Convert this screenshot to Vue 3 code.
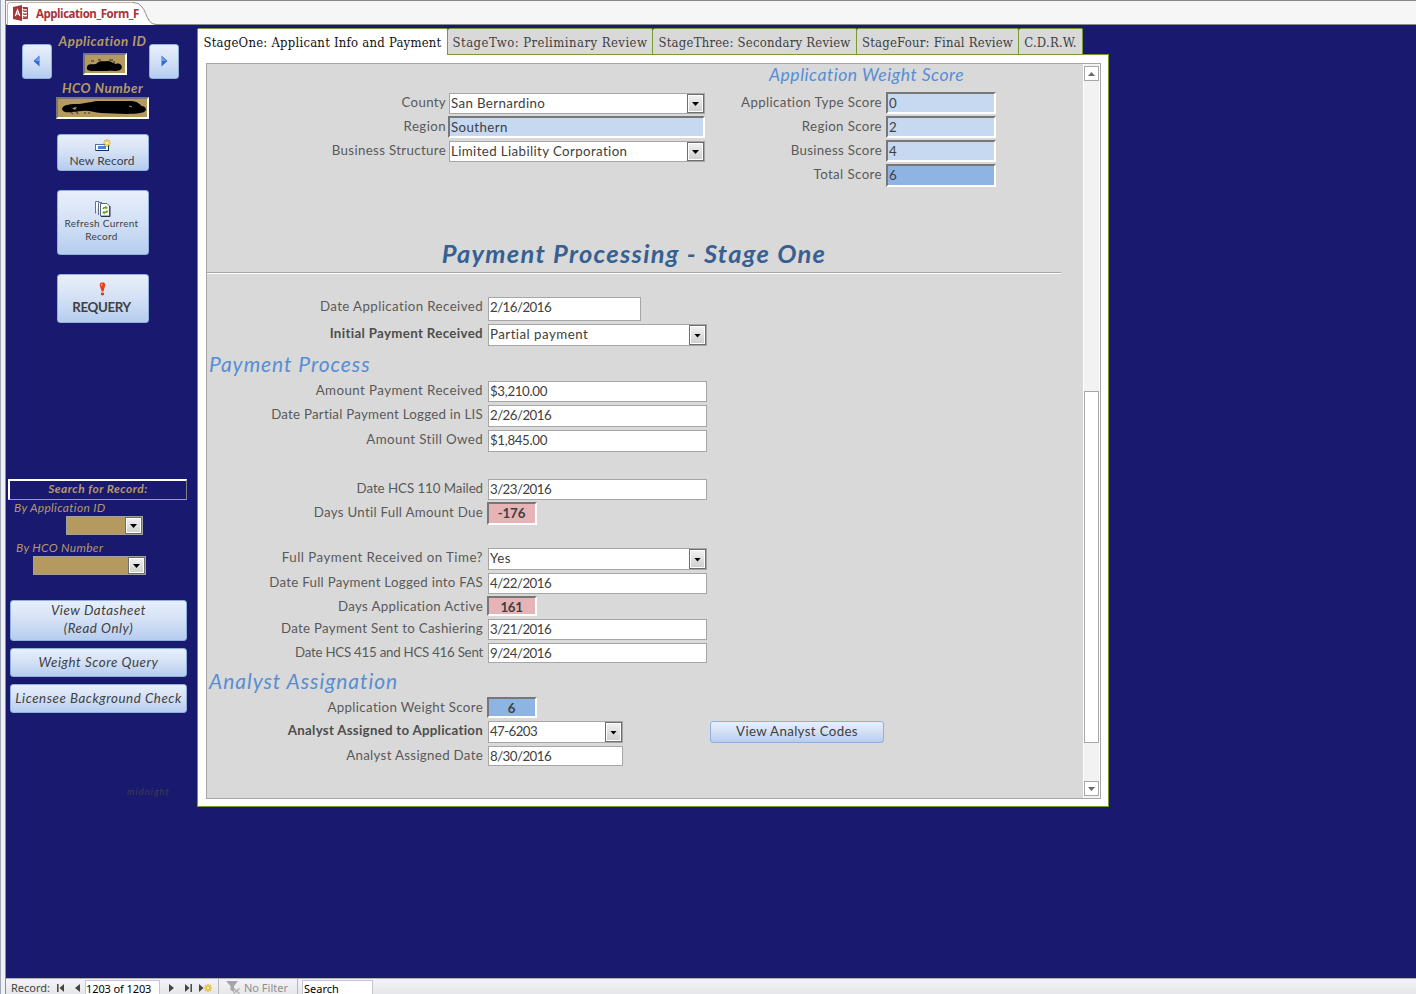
<script setup>
const tabs = [
  { text: 'StageOne: Applicant Info and Payment', cls: 'active' },
  { text: 'StageTwo: Preliminary Review', cls: 't2' },
  { text: 'StageThree: Secondary Review', cls: 't3' },
  { text: 'StageFour: Final Review', cls: 't4' },
  { text: 'C.D.R.W.', cls: 't5' },
]

// ls / vs: letter spacing of the label and of the value
const location = [
  { label: 'County', value: 'San Bernardino', kind: 'combo', gap: 0, h: 21, w: 256, ls: 0.3, vs: 0.36 },
  { label: 'Region', value: 'Southern', kind: 'sunken blue', gap: 2, h: 22, w: 257, ls: 0.4, vs: 0.4 },
  { label: 'Business Structure', value: 'Limited Liability Corporation', kind: 'combo', gap: 3, h: 21, w: 256, ls: 0.33, vs: 0.38 },
]

const scores = [
  { label: 'Application Type Score', value: '0', kind: 'sunken blue', gap: 0, h: 22, w: 110, ls: 0.36 },
  { label: 'Region Score', value: '2', kind: 'sunken blue', gap: 2, h: 22, w: 110, ls: 0.36 },
  { label: 'Business Score', value: '4', kind: 'sunken blue', gap: 2, h: 22, w: 110, ls: 0.33 },
  { label: 'Total Score', value: '6', kind: 'sunken deep', gap: 2, h: 23, w: 110, ls: 0.4 },
]

const received = [
  { label: 'Date Application Received', value: '2/16/2016', kind: '', gap: 0, h: 24, w: 153, ls: 0.4, vs: -0.55 },
  { label: 'Initial Payment Received', value: 'Partial payment', kind: 'combo', gap: 3, h: 22, w: 219, bold: true, ls: 0.34, vs: 0.47 },
]

const payment = [
  { label: 'Amount Payment Received', value: '$3,210.00', kind: '', gap: 0, h: 21, w: 219, ls: 0.43, vs: -0.35 },
  { label: 'Date Partial Payment Logged in LIS', value: '2/26/2016', kind: '', gap: 3, h: 22, w: 219, ls: 0.24, vs: -0.55 },
  { label: 'Amount Still Owed', value: '$1,845.00', kind: '', gap: 3, h: 22, w: 219, ls: 0.37, vs: -0.35 },
  { label: 'Date HCS 110 Mailed', value: '3/23/2016', kind: '', gap: 27, h: 21, w: 219, ls: -0.05, vs: -0.55 },
  { label: 'Days Until Full Amount Due', value: '-176', kind: 'sunken red center', gap: 2, h: 23, w: 50, ls: 0.27, vs: -0.1 },
  { label: 'Full Payment Received on Time?', value: 'Yes', kind: 'combo', gap: 23, h: 22, w: 219, ls: 0.47, vs: 0.4 },
  { label: 'Date Full Payment Logged into FAS', value: '4/22/2016', kind: '', gap: 3, h: 21, w: 219, ls: 0.27, vs: -0.55 },
  { label: 'Days Application Active', value: '161', kind: 'sunken red center', gap: 2, h: 20, w: 50, ls: 0.32, vs: -0.3 },
  { label: 'Date Payment Sent to Cashiering', value: '3/21/2016', kind: '', gap: 3, h: 21, w: 219, ls: 0.3, vs: -0.55 },
  { label: 'Date HCS 415 and HCS 416 Sent', value: '9/24/2016', kind: '', gap: 3, h: 20, w: 219, ls: -0.25, vs: -0.55 },
]

const analyst = [
  { label: 'Application Weight Score', value: '6', kind: 'sunken deep center', gap: 0, h: 21, w: 50, ls: 0.34 },
  { label: 'Analyst Assigned to Application', value: '47-6203', kind: 'combo', gap: 3, h: 22, w: 135, bold: true, ls: 0.27, vs: -0.6, action: 'View Analyst Codes' },
  { label: 'Analyst Assigned Date', value: '8/30/2016', kind: '', gap: 3, h: 20, w: 135, ls: 0.3, vs: -0.55 },
]

const groups = { location, scores, received, payment, analyst }
const px = (n) => (n || 0) + 'px'
</script>

<template>
  <div class="app">
    <div class="edge"></div>
    <div class="main">
      <header class="doc-bar">
        <svg class="doc-shape" width="160" height="25" viewBox="0 0 160 25">
          <path d="M1.500 25V5Q1.500 2.500 4 2.500H130C140 2.500 140 24.500 150 24.500V25Z" fill="#fff" />
          <path d="M1.500 25V5Q1.500 2.500 4 2.500H128" fill="none" stroke="#c9b49a" />
          <path d="M127 2.500C142 2.500 138 24.500 150 24.500H160" fill="none" stroke="#8f8c8a" />
        </svg>
        <svg class="access" width="16" height="16" viewBox="0 0 16 16">
          <path d="M0 2 9 0V16L0 14Z" fill="#a4373a" />
          <path d="M2.300 11 4.500 5 6.800 11M3.200 9H5.900" fill="none" stroke="#fff" stroke-width="1.200" />
          <path d="M9.500 2.500H14.500V13.500H9.500" fill="#fff" stroke="#a4373a" />
          <path d="M10 5.500Q12 7 14.500 5.500M10 8.500Q12 10 14.500 8.500M10 11.500Q12 13 14.500 11.500M10 3.500H14" fill="none" stroke="#a4373a" stroke-width="1.400" />
        </svg>
        <span class="doc-title">Application_Form_F</span>
      </header>

      <div class="workspace">
        <aside class="side">
          <div class="record-id">
            <button class="btn arrow"><svg width="8" height="12" viewBox="0 0 8 12"><path d="M6.500.5V11.500L.5 6Z" fill="#2f68d8" /><path d="M6 2V6H2Z" fill="#6da3f2" /></svg></button>
            <div class="ids">
              <span class="gold-label">Application ID</span>
              <div class="gold sunk small">
                <svg width="40" height="18" viewBox="0 0 40 18">
                  <path d="M6 6h3m4-1h3m8 0h4m1 1v3" stroke="#554d48" fill="none" stroke-width="1.500" />
                  <path d="M2 12C3 8 7 10 11 9C14 5 19 7 23 6C27 6 28 9 31 9C36 7 39 13 35 15C30 17 26 15 22 16H8C4 16 1 15 2 12Z" />
                </svg>
              </div>
              <span class="gold-label hco">HCO Number</span>
            </div>
            <button class="btn arrow"><svg width="8" height="12" viewBox="0 0 8 12"><path d="M1.500.5V11.500L7.500 6Z" fill="#2f68d8" /><path d="M2 2V6H6Z" fill="#6da3f2" /></svg></button>
          </div>
          <div class="gold sunk wide">
            <svg width="89" height="18" viewBox="0 0 89 18">
              <path d="M11 12l4 3m3-3l2 3m7-2v2m4-2v2" stroke="#625646" fill="none" stroke-width="1.500" />
              <path d="M4 10C5 5 14 5 21 5C31 4 34 2 43 2H73C80 2 82 6 84 7C90 8 89 14 82 14C71 16 54 14 43 14C36 14 32 11 24 12C17 12 5 16 4 10Z" />
              <path d="M14 9l5-1-2 3Z" fill="#b49a5f" />
              <path d="M71 7l3 1" stroke="#b49a5f" />
            </svg>
          </div>
          <button class="btn new">
            <svg width="17" height="12" viewBox="0 0 17 12">
              <rect x=".5" y="5.500" width="13" height="6" fill="#fff" stroke="#5c6d96" />
              <path d="M1 11.500H13.500V7" stroke="#1d2c55" fill="none" />
              <rect x="3" y="7" width="8" height="3" fill="#3f83e0" />
              <path d="M12 0V8M8 4H16M9.200 1.200 14.800 6.800M14.800 1.200 9.200 6.800" stroke="#e8a914" stroke-width="1.200" />
              <circle cx="12" cy="4" r="1.800" fill="#fff19b" />
            </svg>
            <span>New Record</span>
          </button>
          <button class="btn refresh">
            <svg width="16" height="16" viewBox="0 0 16 16">
              <path d="M.5 12.500V.5H4M3.500 14V1.500H7" fill="#fff" stroke="#62718c" />
              <path d="M5.500 2.500H12L14.500 5V15H5.500Z" fill="#fff" stroke="#5a6780" />
              <path d="M6 15.500H15V5" stroke="#28344c" fill="none" />
              <path d="M8 8Q8.500 6 11 6.500M12.500 9.500Q12 12 9 11.500" fill="none" stroke="#6d9a22" stroke-width="1.500" />
              <path d="M10.500 4.500 13 7 10.500 8.500ZM9.500 9.500V13.500L7.200 11.500Z" fill="#6d9a22" />
            </svg>
            <span>Refresh Current<br />Record</span>
          </button>
          <button class="btn requery">
            <svg width="7" height="14" viewBox="0 0 7 14">
              <path d="M3.500.5C7 .5 6.500 3 5.500 6L4.500 9.500H2.700L1.500 6C.5 3 0 .5 3.500.5Z" fill="#e34218" />
              <path d="M2 2.500Q2.500 1.500 3.500 2L2.800 5Z" fill="#ffb390" />
              <ellipse cx="3.500" cy="12" rx="1.700" ry="1.400" fill="#d23b14" />
            </svg>
            <span>REQUERY</span>
          </button>

          <div class="search-title">Search for Record:</div>
          <span class="by by-app">By Application ID</span>
          <div class="gold pick pick-app"><i class="drop"></i></div>
          <span class="by by-hco">By HCO Number</span>
          <div class="gold pick pick-hco"><i class="drop"></i></div>

          <button class="btn link tall">View Datasheet<br />(Read Only)</button>
          <button class="btn link wsq">Weight Score Query</button>
          <button class="btn link lbc">Licensee Background Check</button>
          <span class="theme">midnight</span>
        </aside>

        <section class="content">
          <nav class="tabs">
            <div v-for="t in tabs" :key="t.text" class="tab" :class="t.cls"><span>{{ t.text }}</span></div>
          </nav>
          <div class="panel">
            <div class="subform">
              <div class="form">
                <div class="score-title">Application Weight Score</div>
                <template v-for="(rows, name) in groups" :key="name">
                  <h1 v-if="name === 'received'">Payment Processing - Stage One</h1>
                  <h2 v-if="name === 'payment'">Payment Process</h2>
                  <h2 v-if="name === 'analyst'" class="an">Analyst Assignation</h2>
                  <div class="group" :class="name">
                    <div v-for="r in rows" :key="r.label" class="row" :class="{ low: r.kind.startsWith('sunken') }" :style="{ marginTop: px(r.gap), height: px(r.h) }">
                      <label :class="{ bold: r.bold }" :style="{ letterSpacing: px(r.ls) }">{{ r.label }}</label>
                      <div class="field" :class="r.kind" :style="{ width: px(r.w), letterSpacing: px(r.vs) }">
                        <span>{{ r.value }}</span>
                        <i v-if="r.kind === 'combo'" class="drop"></i>
                      </div>
                      <button v-if="r.action" class="btn codes">{{ r.action }}</button>
                    </div>
                  </div>
                </template>
              </div>
              <div class="scroll">
                <div class="sb"><svg width="7" height="4"><path d="M0 4 3.500 0 7 4Z" fill="#686868" /></svg></div>
                <div class="thumb"></div>
                <div class="sb"><svg width="7" height="4"><path d="M0 0 3.500 4 7 0Z" fill="#686868" /></svg></div>
              </div>
            </div>
          </div>
        </section>
      </div>

      <footer class="nav">
        <span class="rec">Record:</span>
        <svg class="first" width="7" height="8"><path d="M.8 0V8" stroke="#444" stroke-width="1.500" /><path d="M7 0V8L2.500 4Z" fill="#444" /></svg>
        <svg class="prev" width="5" height="8"><path d="M5 0V8L0 4Z" fill="#444" /></svg>
        <span class="count">1203 of 1203</span>
        <svg class="next" width="5" height="8"><path d="M0 0V8L5 4Z" fill="#444" /></svg>
        <svg class="last" width="7" height="8"><path d="M6.200 0V8" stroke="#444" stroke-width="1.500" /><path d="M0 0V8L4.500 4Z" fill="#444" /></svg>
        <svg class="add" width="13" height="8"><path d="M0 0V8L4.500 4Z" fill="#444" /><path d="M9 0V8M5 4H13M6 1 12 7M12 1 6 7" stroke="#e6b93a" stroke-width="1.400" /><circle cx="9" cy="4" r="1.300" fill="#fff0a0" /></svg>
        <div class="filter">
          <svg width="15" height="13" viewBox="0 0 15 13"><path d="M0 0H12L8 5V11L4.500 9V5Z" fill="#a6a6a6" /><path d="M7.500 7.500 13.500 12.500M13.500 7.500 7.500 12.500" stroke="#b2b2b2" stroke-width="1.600" /></svg>
          <span>No Filter</span>
        </div>
        <span class="find">Search</span>
      </footer>
    </div>
  </div>
</template>

<style>
body { margin: 0; overflow: hidden; }
</style>

<style scoped>
* { box-sizing: border-box; }
.app { width: 1416px; height: 994px; display: flex; font-family: Lato, "Open Sans", sans-serif; font-size: 13.3px; font-variant-ligatures: none; color: #404040; background: #191970; overflow: hidden; }
.edge { width: 6px; flex: none; background: #f0f1f3; border-left: 1px solid #a0a7b8; border-right: 1px solid #8d8d95; }
.main { flex: 1; min-width: 0; display: flex; flex-direction: column; }
.doc-bar { height: 25px; flex: none; display: flex; align-items: center; position: relative; background: #f6f6f6; border-top: 1px solid #85868a; border-bottom: 1px solid #8b8b8e; }
.doc-shape { position: absolute; left: 0; top: -1px; }
.access { position: relative; margin: 0 0 0 7px; }
.doc-title { position: relative; margin: 1px 0 0 7px; font: bold 11.5px "Open Sans", sans-serif; letter-spacing: -.47px; color: #a8323a; }
.workspace { flex: 1; display: flex; min-height: 0; }
button { font-family: inherit; padding: 0; margin: 0; }
svg { display: block; flex: none; }

.btn { display: flex; flex-direction: column; align-items: center; border: 1px solid #8db0dc; border-radius: 3px; background: linear-gradient(#e8effb, #d3e0f5 50%, #b5cdf0); color: #404040; text-align: center; white-space: nowrap; flex: none; }
.side { width: 191px; flex: none; display: flex; flex-direction: column; align-items: flex-start; }
.record-id { display: flex; height: 72px; margin-left: 16px; }
.arrow { width: 30px; height: 35px; margin-top: 19px; padding-top: 10px; }
.ids { width: 97px; display: flex; flex-direction: column; align-items: center; padding-left: 4px; }
.gold-label { font-size: 13.3px; line-height: 18px; font-weight: bold; font-style: italic; color: #b49a66; margin-top: 7px; white-space: nowrap; letter-spacing: .52px; }
.gold-label.hco { margin-top: 4px; }
.gold { background: #b49a5f; }
.sunk { border: 2px solid #fff; border-top-color: #777; border-left-color: #777; flex: none; }
.small { width: 44px; height: 22px; margin-top: 3px; margin-left: 5px; }
.wide { width: 93px; height: 22px; margin-left: 50px; }
.new { width: 92px; height: 37px; margin: 15px 0 0 51px; padding-top: 4px; font-size: 12px; line-height: 17px; letter-spacing: .1px; }
.new span { margin: 1px 2px 0 0; }
.refresh { width: 92px; height: 65px; margin: 19px 0 0 51px; padding-top: 10px; font-size: 10px; line-height: 13px; letter-spacing: .3px; }
.refresh span { margin-right: 3px; }
.requery { width: 92px; height: 49px; margin: 19px 0 0 51px; padding-top: 7px; font-size: 13.3px; font-weight: bold; line-height: 20px; letter-spacing: -.35px; }
.requery span { margin: 1px 3px 0 0; }
.requery svg { margin-right: 2px; }
.search-title { width: 179px; height: 21px; flex: none; margin: 156px 0 0 2px; border: 2px solid #fff; border-right: 1px solid #808080; border-bottom: 1px solid #a0a0a0; text-align: center; font-size: 12px; line-height: 16px; font-weight: bold; font-style: italic; letter-spacing: .45px; color: #b49a66; }
.by { font-size: 12px; font-style: italic; line-height: 16px; letter-spacing: .3px; color: #b49a66; }
.by-app { margin-left: 8px; }
.by-hco { margin: 5px 0 0 10px; }
.pick { height: 19px; flex: none; border: 1px solid #a0a0a0; display: flex; justify-content: flex-end; }
.pick-app { width: 77px; margin-left: 60px; }
.pick-hco { width: 113px; margin-left: 27px; }
.link { width: 177px; margin-left: 4px; padding-bottom: 2px; font-size: 13.3px; font-style: italic; line-height: 18px; justify-content: center; letter-spacing: .55px; }
.link.tall { height: 41px; margin-top: 25px; display: block; padding-bottom: 3px; }
.wsq { height: 29px; margin-top: 7px; }
.lbc { height: 29px; margin-top: 7px; }
.theme { margin: 72px 0 0 121px; font-size: 9.5px; line-height: 14px; font-style: italic; letter-spacing: 1px; color: #3d3d4c; }

.drop { width: 17px; flex: none; border: 1px solid #6d6d6d; box-shadow: inset 0 0 0 1px #fff; background: linear-gradient(#f2f2f2, #dcdcdc 60%, #cfcfcf); display: flex; align-items: center; justify-content: center; }
.drop::after { content: ""; width: 7px; height: 4px; margin-top: 1px; background: #000; clip-path: polygon(0 0, 100% 0, 50% 100%); }

.content { width: 912px; padding-top: 3px; }
.tabs { display: flex; height: 26px; font-family: "DejaVu Serif Condensed", "DejaVu Serif", serif; font-stretch: condensed; font-size: 13px; letter-spacing: .22px; }
.tab { display: flex; align-items: center; justify-content: center; padding-top: 1px; border: 1px solid #7a9a32; border-left: 0; border-bottom: 0; border-radius: 2px 2px 0 0; background: #d9d9d9; color: #404040; white-space: nowrap; }
.tab.active { width: 251px; height: 27px; position: relative; z-index: 1; border-left: 1px solid #7a9a32; background: #fff; color: #111; }
.t2 { width: 205px; letter-spacing: .45px; }
.t3 { width: 204px; }
.t4 { width: 162px; }
.t5 { width: 64px; }
.panel { height: 753px; border: 1px solid #7a9a32; background: #fff; padding: 8px 7px 7px 8px; }
.subform { height: 736px; border: 1px solid #a6a6a6; background: #d9d9d9; display: flex; }
.form { width: 876px; flex: none; display: grid; grid-template-columns: 499px 377px; grid-template-rows: 28px 96px auto; align-content: start; }
.score-title { grid-column: 2; justify-self: start; margin-left: 63px; font-size: 17.6px; line-height: 22px; font-style: italic; letter-spacing: .48px; color: #558ed5; white-space: nowrap; }
.location { grid-column: 1; grid-row: 2; padding-top: 1px; }
.received, .payment, .analyst, h1, h2 { grid-column: 1 / 3; }
.row { display: flex; align-items: flex-start; }
label { width: 276px; flex: none; margin-right: 5px; text-align: right; line-height: 19px; color: #595959; white-space: nowrap; }
.low label { line-height: 21px; }
label.bold { font-weight: bold; color: #4d4d4d; }
.location label { width: 239px; margin-right: 3px; }
.scores label { width: 176px; margin-right: 5px; }
.field { height: 100%; flex: none; border: 1px solid #a6a6a6; background: #fff; display: flex; justify-content: space-between; line-height: 19px; white-space: nowrap; padding-left: 1px; }
.location .sunken, .scores .sunken { margin-left: -1px; }
.sunken { border: 2px solid #fff; border-top-color: #777; border-left-color: #777; padding-left: 1px; line-height: 18px; }
.blue { background: #c6d9f1; }
.deep { background: #8eb4e3; }
.red { background: #e6b4b6; }
.center { justify-content: center; font-weight: bold; margin-left: -1px; padding-left: 0; padding-right: 1px; }
h1 { margin: 49px 0 0; height: 37px; width: 854px; border-bottom: 1px solid #fff; box-shadow: inset 0 -1px #a6a6a6; text-align: center; font-size: 25.500px; line-height: 32px; font-style: italic; letter-spacing: 1.3px; color: #376092; }
h2 { margin: 3px 0 0 2px; height: 32px; font-size: 21px; line-height: 29px; font-weight: normal; font-style: italic; letter-spacing: .95px; color: #558ed5; }
h2.an { margin-top: 3px; height: 31px; }
.received { padding-top: 23px; }
.codes { width: 174px; height: 22px; margin-left: 87px; line-height: 19px; font-size: 13.3px; letter-spacing: .35px; }

.scroll { width: 17px; flex: none; border-left: 1px solid #fff; border-right: 1px solid #fff; background: #f2f2f2; display: flex; flex-direction: column; align-items: center; padding: 2px 0; }
.sb { width: 15px; height: 15px; flex: none; background: #fff; border: 1px solid #a6a6a6; display: flex; align-items: center; justify-content: center; }
.thumb { width: 15px; height: 352px; flex: none; margin: 310px 0 38px; background: #fff; border: 1px solid #a6a6a6; }

.nav { height: 16px; flex: none; display: flex; align-items: flex-start; background: linear-gradient(#f4f4f6, #e6e7ea); border-top: 1px solid #aeb0b6; font: 11px/15px "Noto Sans", sans-serif; color: #444; white-space: nowrap; }
.nav > svg { margin-top: 5px; }
.rec { width: 39px; margin: 1px 0 0 5px; }
.first { margin-left: 7px; }
.prev { margin-left: 11px; }
.count { width: 75px; height: 14px; margin-left: 5px; margin-top: 1px; padding-left: 0; background: #fff; border: 1px solid #c5c7cc; border-bottom: 0; color: #000; letter-spacing: -.1px; }
.next { margin-left: 9px; }
.last { margin-left: 11px; }
.add { margin-left: 7px; }
.filter { width: 80px; height: 15px; margin-left: 6px; padding-left: 7px; display: flex; border: 1px solid #b5b7bc; border-width: 0 1px; color: #8f8f8f; }
.filter span { margin-top: 1px; }
.filter svg { margin: 2px 3px 0 0; }
.find { width: 71px; height: 14px; margin: 1px 0 0 4px; padding-left: 1px; background: #fff; border: 1px solid #c5c7cc; border-bottom: 0; color: #000; }
</style>
